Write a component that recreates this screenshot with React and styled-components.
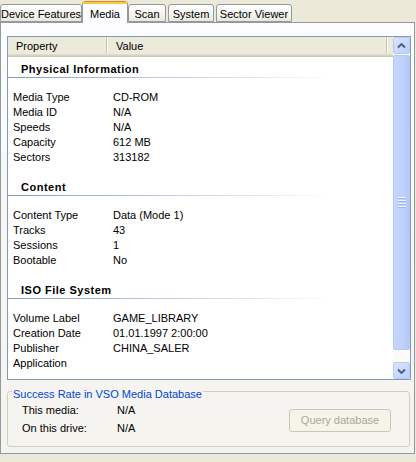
import styled, { createGlobalStyle } from "styled-components";

const GlobalStyle = createGlobalStyle`
  html, body {
    margin: 0;
    padding: 0;
    background: #ece9d8;
  }
  body {
    font-family: "Liberation Sans", Arial, sans-serif;
    font-size: 11px;
    color: #000;
  }
`;

const TABS = [
  { label: "Device Features", width: 82 },
  { label: "Media", width: 46, active: true },
  { label: "Scan", width: 38 },
  { label: "System", width: 46 },
  { label: "Sector Viewer", width: 76 },
];

const SECTIONS = [
  {
    title: "Physical Information",
    rows: [
      ["Media Type", "CD-ROM"],
      ["Media ID", "N/A"],
      ["Speeds", "N/A"],
      ["Capacity", "612 MB"],
      ["Sectors", "313182"],
    ],
  },
  {
    title: "Content",
    rows: [
      ["Content Type", "Data (Mode 1)"],
      ["Tracks", "43"],
      ["Sessions", "1"],
      ["Bootable", "No"],
    ],
  },
  {
    title: "ISO File System",
    rows: [
      ["Volume Label", "GAME_LIBRARY"],
      ["Creation Date", "01.01.1997 2:00:00"],
      ["Publisher", "CHINA_SALER"],
      ["Application", ""],
    ],
  },
];

const Arrow = ({ down }) => (
  <svg width="9" height="6" viewBox="0 0 9 6">
    <path
      d={down ? "M1 1.5 L4.5 5 L8 1.5" : "M1 4.5 L4.5 1 L8 4.5"}
      fill="none"
      stroke="#4d6185"
      strokeWidth="2"
    />
  </svg>
);

const App = () => {
  return (
    <Window>
      <GlobalStyle />
      <TabBar>
        {TABS.map((tab) => (
          <Tab key={tab.label} $active={tab.active} style={{ width: tab.width }}>
            {tab.label}
          </Tab>
        ))}
      </TabBar>
      <Panel>
        <ListView>
          <ListContent>
            <Header>
              <HeaderCell $width={99}>Property</HeaderCell>
              <HeaderCell $width={279}>Value</HeaderCell>
            </Header>
            <ListBody>
              {SECTIONS.map((section, idx) => (
                <Section key={section.title} $first={idx === 0}>
                  <SectionTitle>{section.title}</SectionTitle>
                  <Rows>
                    {section.rows.map(([label, value]) => (
                      <Row key={label}>
                        <Label>{label}</Label>
                        <Value>{value}</Value>
                      </Row>
                    ))}
                  </Rows>
                </Section>
              ))}
            </ListBody>
          </ListContent>
          <ScrollBar>
            <ScrollButton>
              <Arrow />
            </ScrollButton>
            <Thumb>
              <Grip />
              <Grip />
              <Grip />
              <Grip />
            </Thumb>
            <Track />
            <ScrollButton>
              <Arrow down />
            </ScrollButton>
          </ScrollBar>
        </ListView>
        <GroupBox>
          <Legend>Success Rate in VSO Media Database</Legend>
          <GroupBody>
            <StatRows>
              <Row>
                <StatLabel>This media:</StatLabel>
                <Value>N/A</Value>
              </Row>
              <Row>
                <StatLabel>On this drive:</StatLabel>
                <Value>N/A</Value>
              </Row>
            </StatRows>
            <QueryButton disabled>Query database</QueryButton>
          </GroupBody>
        </GroupBox>
      </Panel>
    </Window>
  );
};

const Window = styled.div`
  width: 416px;
  height: 462px;
  overflow: hidden;
  background: #ece9d8;
`;

const TabBar = styled.div`
  display: flex;
  align-items: flex-end;
  height: 22px;
  gap: 2px;
`;

const Tab = styled.div`
  position: relative;
  box-sizing: border-box;
  display: flex;
  align-items: center;
  justify-content: center;
  height: ${(p) => (p.$active ? "22px" : "18px")};
  padding: ${(p) => (p.$active ? "2px 0 1px" : "2px 0 0")};
  margin: ${(p) => (p.$active ? "0 -2px -1px" : "0")};
  z-index: ${(p) => (p.$active ? 1 : 0)};
  border: 1px solid #919b9c;
  border-bottom: ${(p) => (p.$active ? "none" : "1px solid #919b9c")};
  border-top: ${(p) => (p.$active ? "3px solid #ffc83c" : "1px solid #919b9c")};
  border-radius: 3px 3px 0 0;
  background: ${(p) =>
    p.$active ? "#fcfcfe" : "linear-gradient(#fefefe, #f4f3ee 60%, #e9e7dd)"};
  white-space: nowrap;

  &::before {
    content: "";
    display: ${(p) => (p.$active ? "block" : "none")};
    position: absolute;
    top: -3px;
    left: 1px;
    right: 1px;
    height: 1px;
    background: #e68b2c;
  }
`;

const Panel = styled.div`
  box-sizing: border-box;
  display: flex;
  flex-direction: column;
  width: 415px;
  height: 432px;
  padding: 13px 3px 0 6px;
  border: 1px solid #919b9c;
  background: linear-gradient(#fcfcfe, #f4f3ee);
`;

const ListView = styled.div`
  box-sizing: border-box;
  display: flex;
  height: 344px;
  border: 1px solid #7f9db9;
  background: #fff;
`;

const ListContent = styled.div`
  flex: 1;
  display: flex;
  flex-direction: column;
  overflow: hidden;
`;

const Header = styled.div`
  display: flex;
  height: 20px;
  background: linear-gradient(
    to bottom,
    #ebeadb 0,
    #ebeadb 17px,
    #e2decd 17px,
    #e2decd 18px,
    #d6d2c2 18px,
    #d6d2c2 19px,
    #cbc7b8 19px
  );
`;

const HeaderCell = styled.div`
  box-sizing: border-box;
  width: ${(p) => p.$width}px;
  height: 17px;
  padding: 2px 0 0 8px;
  line-height: 15px;
  border-right: 1px solid #c7c5b2;
  box-shadow: 1px 0 0 #fff;
  margin-right: 1px;
`;

const ListBody = styled.div`
  flex: 1;
`;

const Section = styled.div`
  padding-top: ${(p) => (p.$first ? "5px" : "15px")};
`;

const SectionTitle = styled.div`
  padding: 0 0 1px 13px;
  line-height: 15px;
  font-weight: bold;
  letter-spacing: 0.5px;
  background: linear-gradient(to right, #7f9cc4, rgba(255, 255, 255, 0) 85%) left
    bottom / 100% 1px no-repeat;
`;

const Rows = styled.div`
  display: flex;
  flex-direction: column;
  margin-top: 12px;
  padding-left: 5px;
`;

const Row = styled.div`
  display: flex;
  line-height: 15px;
  white-space: nowrap;
`;

const Label = styled.div`
  width: 100px;
`;

const Value = styled.div`
  flex: 1;
`;

const ScrollBar = styled.div`
  display: flex;
  flex-direction: column;
  width: 17px;
  background: #fbfbf8;
`;

const ScrollButton = styled.div`
  box-sizing: border-box;
  display: flex;
  align-items: center;
  justify-content: center;
  height: 17px;
  border: 1px solid #b6c9f4;
  border-radius: 2px;
  background: linear-gradient(135deg, #dbe6fe, #bccff8);
`;

const Thumb = styled.div`
  box-sizing: border-box;
  display: flex;
  flex-direction: column;
  align-items: center;
  justify-content: center;
  gap: 1px;
  height: 295px;
  margin-top: 1px;
  border: 1px solid #b3c6f5;
  border-radius: 2px;
  background: linear-gradient(to right, #c6d6fc, #bfd1fb 60%, #b5c9f6);
`;

const Grip = styled.div`
  width: 8px;
  height: 1px;
  background: #eef4fe;
  box-shadow: 0 1px 0 #9cb7f4;
  margin-bottom: 1px;
`;

const Track = styled.div`
  flex: 1;
`;

const GroupBox = styled.div`
  box-sizing: border-box;
  display: flex;
  flex-direction: column;
  height: 56px;
  margin: 11px 1px 0 0;
  padding: 0 18px 0 14px;
  border: 1px solid #d0d0bf;
  border-radius: 3px;
`;

const Legend = styled.div`
  align-self: flex-start;
  margin: -5px 0 0 -10px;
  padding: 0 1px;
  line-height: 15px;
  color: #0046d5;
  background: #f5f4f0;
`;

const GroupBody = styled.div`
  display: flex;
  align-items: center;
  justify-content: space-between;
  padding-top: 1px;
`;

const StatRows = styled.div`
  display: flex;
  flex-direction: column;
  gap: 3px;
`;

const StatLabel = styled.div`
  width: 95px;
`;

const QueryButton = styled.button`
  box-sizing: border-box;
  width: 102px;
  height: 23px;
  margin-top: 1px;
  padding: 0;
  font-family: inherit;
  font-size: 11px;
  color: #aca899;
  background: #f5f4ea;
  border: 1px solid #c9c7ba;
  border-radius: 3px;
`;

export default App;
